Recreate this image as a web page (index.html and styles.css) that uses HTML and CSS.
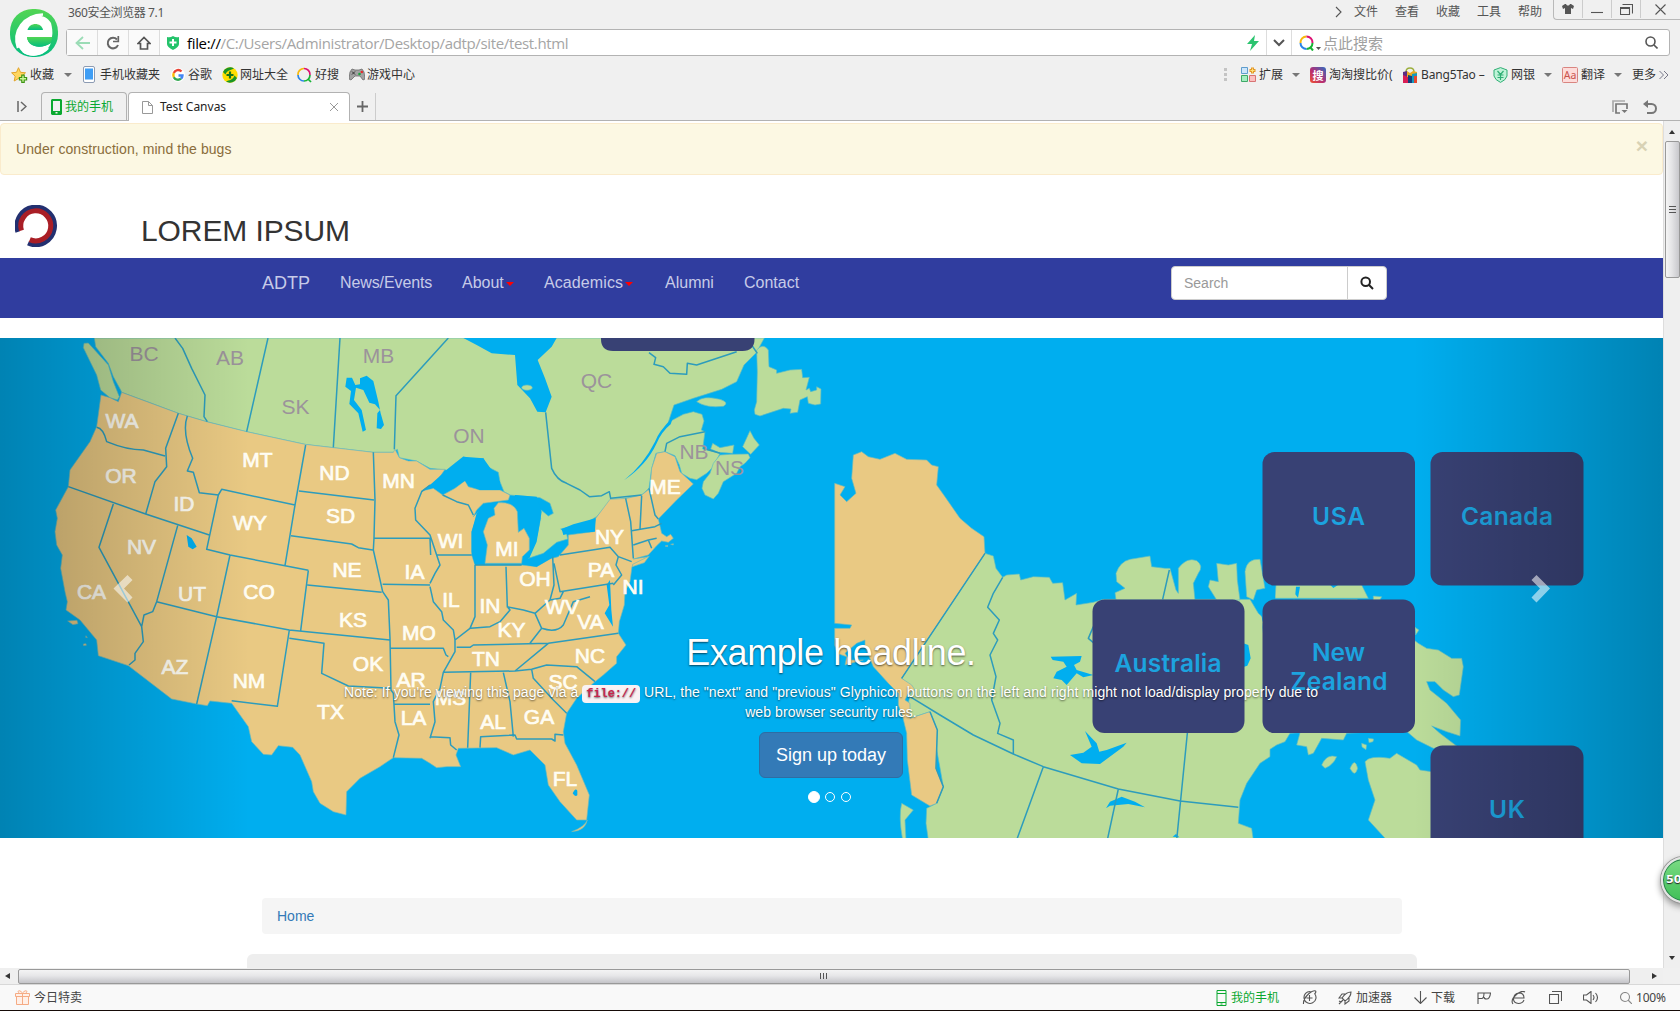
FILE: index.html
```html
<!DOCTYPE html>
<html lang="zh-CN">
<head>
<meta charset="utf-8">
<title>Test Canvas</title>
<link rel="stylesheet" href="styles.css">
</head>
<body>
<div class="window">
<header class="chrome">
  <svg class="brand" width="52" height="58" viewBox="0 0 52 58"><defs><linearGradient id="lg" x1="0" y1="0" x2="0" y2="1"><stop offset="0" stop-color="#52d553"/><stop offset="1" stop-color="#04bd80"/></linearGradient></defs><rect x="0" y="1" width="48" height="48" rx="22.500" fill="url(#lg)"/><path d="M42 29H17c1 11 15 12 24 6-5 12-17 16-27 10C3 37 5 22 14 14c9-8 21-9 27 1 1 4 2 9 1 14z" fill="#fff"/><path d="M17.500 22c2-8 14-8 15.500 0z" fill="url(#lg)"/><path d="M17 29h25l-1 6c-9 6-23 5-24-6z" fill="url(#lg)"/><path d="M8 40C2 23 14 7 33 6.500M13 43c6 5 18 5 25-3" fill="none" stroke="#fff" stroke-width="2.500"/></svg>
  <div class="bars">
    <div class="titlebar">
      <span class="app">360安全浏览器 7.1</span>
      <div class="menus"><svg width="8" height="12" viewBox="0 0 8 12" class="st"><path d="M1 1l5 5-5 5"/></svg><span>文件</span><span>查看</span><span>收藏</span><span>工具</span><span>帮助</span></div>
      <div class="winbtns">
        <span><svg width="12" height="10" viewBox="0 0 12 10"><path d="M3 0h1c1 2 3 2 4 0h1l3 2-1 3-2-1v6H3V4L1 5 0 2z" fill="#555"/></svg></span>
        <span><svg width="12" height="10" viewBox="0 0 12 10" class="st"><path d="M0 8.500h12"/></svg></span>
        <span><svg width="13" height="11" viewBox="0 0 13 11" class="st"><path d="M.5 3.500h9v7h-9zM.5 4.500h9M2.500 .5h10v9"/></svg></span>
        <span><svg width="11" height="11" viewBox="0 0 11 11" class="st"><path d="M.5 .5l10 10M10.500 .5l-10 10"/></svg></span>
      </div>
    </div>
    <div class="address">
      <span class="ab"><svg width="15" height="14" viewBox="0 0 15 14" fill="none" stroke="#9bdcb6" stroke-width="1.800"><path d="M15 7H1.500M8 1L1.500 7 8 13"/></svg></span>
      <span class="ab"><svg width="14" height="14" viewBox="0 0 14 14" fill="none" stroke="#666" stroke-width="2"><path d="M11 3.500A5.300 5.300 0 1 0 12 9"/><path d="M12.300 0v5.500H7" stroke-width="1.700"/></svg></span>
      <span class="ab"><svg width="14" height="14" viewBox="0 0 14 14" fill="none" stroke="#555" stroke-width="1.700"><path d="M1 7.500L7 1.500l6 6h-2.500v5.500h-7V7.500z"/></svg></span>
      <svg class="shield" width="12" height="14" viewBox="0 0 12 14"><path d="M0 1q3 1 6-1 3 2 6 1v7q0 3-6 6-6-3-6-6z" fill="#24c36b"/><path d="M6 3v7M2.500 6.500h7" stroke="#fff" stroke-width="2"/></svg>
      <span class="url"><b>file://</b>/C:/Users/Administrator/Desktop/adtp/site/test.html</span>
      <svg class="bolt" width="12" height="16" viewBox="0 0 12 16"><path d="M8 0L0 9h5l-2 7 9-10H7z" fill="#2bc46f"/></svg>
      <span class="drop"><svg width="12" height="8" viewBox="0 0 12 8" fill="none" stroke="#555" stroke-width="2"><path d="M1 1l5 5 5-5"/></svg></span>
      <svg class="so" width="22" height="16" viewBox="0 0 22 16" fill="none" stroke-width="2"><path d="M1.500 8A6 6 0 0 1 7.500 1.500" stroke="#f6b90c"/><path d="M7.500 1.500A6 6 0 0 1 13.500 8" stroke="#dd1173"/><path d="M13.500 8A6 6 0 0 1 7.500 14" stroke="#17b536"/><path d="M7.500 14A6 6 0 0 1 1.500 8" stroke="#2a84e8"/><path d="M11 12l3 3.500" stroke="#17b536"/><path d="M17 12h5l-2.500 3z" fill="#555"/></svg>
      <span class="ph">点此搜索</span>
      <svg class="mag" width="13" height="13" viewBox="0 0 13 13" fill="none" stroke="#555" stroke-width="1.600"><circle cx="5.500" cy="5.500" r="4.500"/><path d="M9 9l3.500 3.500"/></svg>
    </div>
  </div>
</header>
<div class="bookmarks">
  <span class="bm w1"><svg width="17" height="16" viewBox="0 0 17 16"><path d="M7.500 .7l2 4.600 5 .5-3.700 3.400 1 4.800-4.300-2.500L3.200 14l1-4.800L.6 5.800l4.900-.5z" fill="#ffd65e" stroke="#e2a42b"/><path d="M12 7.500v8.500M7.800 11.800h8.400" stroke="#3d9413" stroke-width="3.600"/><path d="M12 8.800v6M9 11.800h6" stroke="#c9f79a" stroke-width="1.400"/></svg>收藏</span>
  <i class="dn w2"></i>
  <span class="bm w3"><svg width="13" height="17" viewBox="0 0 13 17"><rect x=".5" y=".5" width="11" height="16" rx="1.500" fill="#fff" stroke="#8c9bb3"/><rect x="2" y="2.500" width="8" height="11" fill="#3f9ef5"/></svg>手机收藏夹</span>
  <span class="bm w4"><svg width="14" height="14" viewBox="0 0 14 14" fill="none" stroke-width="2.400"><circle cx="7" cy="7" r="7" fill="#fff"/><path d="M10.500 3.500A4.700 4.700 0 0 0 2.800 5" stroke="#ea4335"/><path d="M2.800 5a5 5 0 0 0 0 4.200" stroke="#fbbc05"/><path d="M2.800 9.200A4.700 4.700 0 0 0 10 10.700" stroke="#34a853"/><path d="M10 10.700c1-1 1.500-2 1.500-3.200H7.500" stroke="#4285f4"/></svg>谷歌</span>
  <span class="bm w5"><svg width="16" height="16" viewBox="0 0 16 16"><circle cx="8" cy="8" r="7.700" fill="#ffde00"/><path d="M1 5A7.700 7.700 0 0 1 12 1.400C9 3 5 3 3.500 7.500z" fill="#199526"/><path d="M15 11A7.700 7.700 0 0 1 4 14.600C7 13 11 13 12.500 8.500z" fill="#199526"/><path d="M8 4.500v7M4.500 8h7" stroke="#14741b" stroke-width="2.200"/></svg>网址大全</span>
  <span class="bm w6"><svg width="15" height="16" viewBox="0 0 15 16" fill="none" stroke-width="1.700"><path d="M1 8A6 6 0 0 1 7 1.500" stroke="#f6b90c"/><path d="M7 1.500A6 6 0 0 1 13 8" stroke="#dd1173"/><path d="M13 8A6 6 0 0 1 7 14" stroke="#17b536"/><path d="M7 14A6 6 0 0 1 1 8" stroke="#2a84e8"/><path d="M11 12l3 3" stroke="#17b536"/></svg>好搜</span>
  <span class="bm w7"><svg width="16" height="13" viewBox="0 0 16 13"><path d="M3 1l3 1h4l3-1 2 3 1 7-2 1-3-4H6l-4 4-2-1 1-7z" fill="#a2a2a2" stroke="#6b6b6b" stroke-width=".8"/><path d="M3 3.500l3 3M6 3.500l-3 3" stroke="#333"/><circle cx="10.500" cy="6" r="1.300" fill="#18a33c"/><circle cx="12.800" cy="4" r="1.300" fill="#e52c2c"/></svg>游戏中心</span>
  <span class="grow"></span>
  <svg class="w8" width="3" height="13" viewBox="0 0 3 13" fill="#c4c4c4"><path d="M0 0h3v3H0zM0 5h3v3H0zM0 10h3v3H0z"/></svg>
  <span class="bm w9"><svg width="15" height="15" viewBox="0 0 15 15"><path d="M.5 .5h6v6h-6z" fill="#cde6fb" stroke="#5f9dcd"/><path d="M.5 8.500h6v6h-6z" fill="#a4edc0" stroke="#3fa968"/><path d="M8.500 8.500h6v6h-6z" fill="#fbc0c0" stroke="#d87474"/><path d="M11.500 .5v6M8.500 3.500h6" stroke="#e39828" stroke-width="3"/><path d="M11.500 1.500v4M9.500 3.500h4" stroke="#ffe27a"/></svg>扩展</span>
  <i class="dn w10"></i>
  <span class="bm w11"><svg width="16" height="16" viewBox="0 0 16 16"><defs><linearGradient id="tt" x1="0" y1="1" x2="1" y2="0"><stop stop-color="#f2542d"/><stop offset=".45" stop-color="#b52d74"/><stop offset="1" stop-color="#2f6cc0"/></linearGradient></defs><rect width="16" height="16" rx="3" fill="url(#tt)"/><text x="2.500" y="12.500" class="sou">搜</text></svg>淘淘搜比价(</span>
  <span class="bm w12"><svg width="14" height="16" viewBox="0 0 14 16"><path d="M3 5Q3 1 7 1t4 4" fill="none" stroke="#9caf3d" stroke-width="1.500"/><path d="M0 5l4-1v12H0z" fill="#5b2d83"/><path d="M0 8l5 2v6H0z" fill="#d91e54"/><path d="M4 4l3 2 3-2 4 1v5H4z" fill="#eaaa22"/><path d="M5 8l4 1v7H5z" fill="#123e7c"/><path d="M9 7l5-1v10H9z" fill="#1599bd"/><path d="M11 9h3v7h-3z" fill="#e6482e"/></svg>Bang5Tao –</span>
  <span class="bm w13"><svg width="15" height="16" viewBox="0 0 15 16"><path d="M7.500 .6l6.500 2.400v6q-1 4-6.500 6.400Q2 13 1 9V3z" fill="#bff3d8" stroke="#2fae74"/><path d="M4.500 4l3 3.500 3-3.500M7.500 7.500V13M4.500 8h6M4.500 10.500h6" fill="none" stroke="#2fae74" stroke-width="1.200"/></svg>网银</span>
  <i class="dn w14"></i>
  <span class="bm w15"><svg width="16" height="16" viewBox="0 0 16 16"><rect x=".5" y=".5" width="15" height="15" rx="1" fill="#fddcda" stroke="#d98580"/><text x="1.700" y="12" class="aa">Aa</text></svg>翻译</span>
  <i class="dn w16"></i>
  <span class="bm w17">更多</span>
  <svg width="10" height="8" viewBox="0 0 10 8" fill="none" stroke="#778"><path d="M.5 0l4 4-4 4M5 0l4 4-4 4"/></svg>
</div>
<div class="tabs">
  <svg class="pin" width="10" height="11" viewBox="0 0 10 11" fill="none" stroke="#666" stroke-width="1.500"><path d="M1 0v11M4 1l5 4.500L4 10"/></svg>
  <div class="tab phone"><svg width="11" height="16" viewBox="0 0 11 16"><path fill-rule="evenodd" d="M1 0h9l1 1v14l-1 1H1l-1-1V1zm1 2v10h7V2zm2.500 11v1.500h2V13z" fill="#0aa830"/></svg>我的手机</div>
  <div class="tab active"><svg width="11" height="13" viewBox="0 0 11 13" fill="#fff" stroke="#999"><path d="M.5 .5h6l4 4v8H.5zM6.500 .5v4h4"/></svg><span>Test Canvas</span><svg width="8" height="8" viewBox="0 0 8 8" stroke="#999"><path d="M0 0l8 8M8 0L0 8"/></svg></div>
  <div class="plus"><svg width="11" height="11" viewBox="0 0 11 11" stroke="#666" stroke-width="1.800"><path d="M5.500 0v11M0 5.500h11"/></svg></div>
  <span class="grow"></span>
  <svg class="rst" width="17" height="15" viewBox="0 0 17 15" fill="none" stroke="#777" stroke-width="1.700"><path d="M1 12V1h12" stroke="#aaa"/><path d="M8 13H4V4h11v5"/><path d="M9.500 10h6l-3 3z" fill="#777" stroke="none"/></svg>
  <svg class="undo" width="15" height="14" viewBox="0 0 15 14" fill="none" stroke="#777" stroke-width="2"><path d="M2 4h6.500a4.500 4.500 0 0 1 0 9H4"/><path d="M0 4l5-4v8z" fill="#777" stroke="none"/></svg>
</div>
<main class="view">
<div class="page">
  <div class="alert"><span>Under construction, mind the bugs</span><b>×</b></div>
  <div class="masthead"><svg width="42" height="42" viewBox="0 0 42 42" fill="none"><path d="M2.700 27A19 19 0 1 1 13 38.300" stroke="#233070" stroke-width="4.500"/><path d="M6.500 25.500A15 15 0 1 1 14.800 34.600" stroke="#a91e26" stroke-width="5"/></svg><h1>LOREM IPSUM</h1></div>
  <nav class="nav">
    <a class="n0">ADTP</a><a class="n1">News/Events</a><a class="n2">About<i></i></a><a class="n3">Academics<i></i></a><a class="n4">Alumni</a><a class="n5">Contact</a>
    <span class="grow"></span>
    <div class="search"><span>Search</span><em><svg width="14" height="14" viewBox="0 0 14 14" fill="none" stroke="#222" stroke-width="2"><circle cx="5.700" cy="5.700" r="4.300"/><path d="M8.800 8.800l4.200 4.200"/></svg></em></div>
  </nav>
  <section class="carousel">
    <svg class="map" width="1663" height="500" viewBox="0 338 1663 500">
      <defs>
        <linearGradient id="gl"><stop stop-opacity=".25"/><stop offset="1" stop-opacity="0"/></linearGradient>
        <linearGradient id="gr"><stop stop-opacity="0"/><stop offset="1" stop-opacity=".25"/></linearGradient>
      </defs>
      <rect y="338" width="1663" height="500" fill="#00aeef"/>
      <!-- North America, west to east -->
      <g transform="translate(0 335) scale(.33333)" stroke-linejoin="round">
        <g class="green">
          <path d="M283 9L287 35 325 85 340 125 362 165 365 172 450 203 535 235 620 260 740 290 915 328 1120 352 1180 352 1192 343 1198 368 1250 378 1290 400 1340 405 1365 385 1390 365 1420 376 1450 370 1457 392 1495 412 1500 440 1512 470 1530 480 1620 488 1650 505 1660 535 1645 543 1615 518 1622 550 1612 600 1596 640 1585 670 1630 655 1670 622 1703 612 1700 598 1682 582 1755 565 1790 545 1830 500 1925 480 1947 460 1955 400 1968 355 1995 350 2025 362 2038 390 2045 415 2070 430 2090 434 2120 415 2140 395 2160 355 2108 342 2115 290 2104 285 2112 258 2106 238 2080 230 2050 238 2005 262 2012 240 2022 210 2080 190 2165 163 2210 140 2232 90 2270 52 2293 9Z"/>
          <path d="M265 24L325 90 340 140 358 185 352 195 330 188 302 165 290 120 250 38 252 25Z"/>
          <path d="M2270 45Q2290 22 2305 45L2307 95 2330 105 2330 115 2370 105 2405 103 2408 128 2428 127 2418 165 2428 160 2432 170 2450 165 2450 155 2463 162 2462 207 2445 210 2425 205 2422 185 2400 195 2393 232 2370 235 2373 222 2350 220 2280 243 2265 238 2263 225 2270 200 2272 110Z"/>
          <path d="M2090 200Q2110 180 2160 193 2190 203 2170 214 2120 220 2090 200ZM2160 360L2190 358 2245 357 2250 368 2235 385 2220 395 2210 415 2170 440 2155 475 2140 492 2115 480 2106 460 2110 440 2130 415 2140 385ZM2250 287L2262 310 2278 330 2252 358 2228 335ZM2138 325L2160 338 2202 330 2198 355 2155 352 2132 342Z"/>
        </g>
        <g class="water"><path d="M1390 9L1430 30 1475 55 1545 60 1552 150 1590 190 1612 230 1637 232 1655 185 1635 130 1613 75 1655 35 1670 9ZM1872 436Q1930 390 1965 320 1975 290 2020 245L2012 268Q1985 290 1970 325 1940 390 1872 436ZM1040 128L1056 128 1066 150 1080 148 1080 130 1100 122 1120 138 1135 200 1142 235 1152 270 1143 282 1130 280 1132 235 1140 225 1125 208 1108 203 1090 165 1068 158 1062 195 1085 225 1098 285 1088 290 1075 235 1048 207 1053 168 1036 155Z"/></g>
        <ellipse class="green" cx="1581" cy="158" rx="16" ry="8"/>
        <g class="us">
          <path d="M303 180L330 188 355 200 365 172 535 235 620 260 740 290 915 328 1120 352 1180 352 1185 343 1198 368 1225 378 1250 378 1290 403 1335 403 1310 440 1290 450 1265 468 1300 460 1328 480 1365 460 1395 437 1405 455 1440 465 1500 465 1530 480 1525 495 1450 505 1430 525 1420 545 1435 530 1415 590 1415 660 1425 690 1565 690 1610 695 1650 672 1675 665 1705 630 1705 600 1780 590 1787 550 1830 493 1880 490 1925 480 1950 460 1955 400 1970 355 1995 350 2025 365 2040 410 2080 447 2030 495 1975 552 1985 595 2000 605 2012 598 2020 610 2005 622 1985 618 1970 632 1945 660 1900 672 1945 665 1930 680 1896 695 1890 740 1875 770 1873 810 1858 860 1855 895 1878 930 1850 965 1850 985 1810 1020 1785 1040 1730 1090 1700 1135 1690 1190 1695 1225 1730 1290 1768 1380 1760 1455 1730 1455 1680 1400 1645 1350 1635 1290 1590 1245 1540 1260 1490 1238 1375 1240 1368 1260 1382 1295 1340 1295 1310 1298 1290 1285 1265 1270 1180 1268 1140 1295 1080 1330 1040 1370 1038 1440 1000 1430 960 1405 940 1370 935 1340 900 1260 878 1237 835 1232 815 1260 790 1258 755 1220 745 1175 695 1105 630 1098 622 1112 590 1107 515 1092 385 992 295 962 290 915 240 855 198 825 202 800 195 770 182 700 187 660 170 630 165 590 172 550 167 525 205 455 210 405 270 320 290 275Z"/>
        </g>
        <g class="water"><path d="M1495 500L1478 515 1485 540 1465 560 1450 590 1463 635 1455 690 1425 690 1415 650 1415 590 1430 535 1455 507ZM1540 515L1545 480 1610 485 1625 530 1610 620 1588 670 1565 672 1590 640 1590 605 1570 580 1550 592ZM1565 688L1585 675 1615 668 1660 635 1690 640 1670 658 1650 672 1610 695ZM1685 582L1720 568 1787 550 1785 590 1710 595 1690 600ZM1290 450L1340 405 1390 365 1450 370 1500 440 1500 465 1440 465 1405 450 1395 437 1360 460 1328 475 1300 458 1265 468ZM560 600L575 610 590 635 578 643 565 635ZM1718 1375q8-18 14-8v14q-7 6-14-6ZM1830 735l-10 15 8 60-14 25 25 40-5-50Z"/></g>
        <path class="us" d="M1495 503Q1540 500 1552 530L1555 592 1572 580 1588 610 1588 645 1567 665 1565 685 1455 685 1462 630 1450 590 1465 550 1485 540 1482 520Z"/>
        <path class="us" d="M203 858l28-2 3 10-15 3zM258 902l4 6-5-1zM250 927l8-1 1 5-8 1zM1898 688l50-25-15 20-36 12zM1715 1490q40-15 47-35-7 33-47 35zM1995 633l8-2v4zM2012 628l8-2v4z"/>
        <g class="lines">
          <path d="M525 9L548 40 575 100 615 180 612 245 622 260M804 9L740 290M1020 9L1000 337M1290 70L1188 182 1183 343M1290 70L1345 9M1637 232L1655 400Q1670 435 1700 445L1740 465 1768 485 1805 482 1828 470 1832 490 1925 480M1947 53L1967 68 1962 88 1990 95 2010 115 2060 118 2062 85 2090 90 2210 50M2255 30L2272 55"/>
          <path d="M290 277Q310 280 320 320 380 345 430 345L495 363M535 235L497 340 500 395 465 440 437 537M205 455L437 537 628 600M562 243Q545 290 578 370L562 408 580 412 598 473 655 480 665 463 885 510M655 480L620 643 690 660 855 692 925 706M917 330L885 510 855 692M897 468L1122 495M873 602L1055 627 1075 638 1118 645M1120 352L1125 495 1122 610 1120 645 1148 770 1165 795 1170 910 1173 1065 1180 1075 1185 1160 1197 1200 1180 1268M1122 610H1290L1292 660M1290 450L1265 470 1245 520 1247 555 1290 600 1310 660 1320 690 1305 715 1290 745M340 507L297 637 425 875 430 920 405 955 405 975 387 990M533 572L470 800 458 830 432 840 425 875M470 800L650 845 868 885 1170 915M690 660L650 845 590 1107M925 706L902 887M922 750L1145 772M868 885L832 1114 695 1097M868 910L972 925 965 1015 1045 1053 1173 1060M1148 748L1290 750M1172 940H1330L1338 960 1345 965M1183 1108H1290"/>
          <path d="M1328 480L1370 500 1405 510 1420 540M1310 660H1415M1425 690L1425 845 1410 880 1365 915 1360 885 1330 855 1325 830 1300 800 1290 755M1518 695L1522 815 1530 825 1500 860 1470 875 1412 880M1425 690H1565M1658 665L1662 750 1650 795 1605 835 1570 825 1520 815M1680 660L1830 637 1855 665 1895 680M1662 685L1680 770 1840 745M1855 665L1848 690 1865 720 1840 750M1370 937L1410 937 1420 930 1645 925 1855 895M1605 835L1625 880 1590 925M1625 880Q1670 895 1690 870L1720 800 1770 785M1650 795L1680 790 1690 770M1330 1012L1545 1008 1645 925M1545 1008L1595 1003 1640 990 1730 995 1785 1040M1595 1003L1600 1030 1660 1095 1700 1135M1365 915L1365 950 1330 1012 1320 1060 1300 1100 1305 1160 1290 1210M1412 1013L1403 1238M1510 1013L1530 1100 1540 1205M1440 1238L1442 1205 1545 1200 1550 1212 1655 1212 1665 1218 1665 1198 1690 1200M1290 1205L1350 1208 1352 1230 1370 1245M1877 490L1892 560 1900 670M1925 482L1920 583M1947 460L1965 540 1975 552M1895 587L1965 575 1985 565M1900 630L1945 615 1970 610M1945 615L1955 640M1995 350L2000 325 2040 305 2115 290M2160 355L2110 340"/>
        </g>
      </g>
      <!-- Arctic coast -->
      <g transform="translate(830 440) scale(.33333)">
        <g class="green">
          <path d="M465 340L490 348 498 385 518 412 530 405 568 402 572 420 610 410 658 412 668 430 698 428 705 480 740 460 738 495 790 487 820 478 1160 478 1260 478 1285 520 1330 560 1390 480 1580 478 1700 560 1765 610 1790 625 1825 630 1865 655 1895 655 1900 680 1888 765 1870 770 1840 750 1815 725 1790 725 1800 750 1850 790 1892 840 1890 888 1850 875 1805 858 1830 880 1880 918 1810 925 1760 900 1725 870 1550 880 1540 900 1475 895 1450 940 1435 945 1430 920 1400 915 1410 878 1380 880 1365 905 1340 915 1320 928 1320 950 1290 970 1250 1030 1230 1080 1225 1150 1265 1165 1270 1200H295L288 1150 290 1105 320 1090 340 1040 300 815 240 835 235 790 245 740 215 715Z"/>
          <path d="M858 400Q870 365 900 358L960 348 965 380 1005 385 1020 385 1038 450 1045 460 1045 385Q1070 350 1100 362 1122 378 1105 400L1090 430 1095 480H858L855 458 885 445 860 425ZM1160 370L1195 375 1220 370 1222 420 1230 480H1160L1135 440 1140 420 1165 425ZM1245 395Q1250 355 1290 358L1305 445 1280 450 1270 480 1250 470ZM1338 435H1595L1615 475H1335ZM1630 468l25 2-5 10h-20zM1755 562l12 8-10 15z"/>
          <path d="M1605 965Q1620 945 1680 955L1700 940 1760 975 1770 990 1805 995V1200H1670L1615 1140 1635 1080 1615 1020ZM1475 975Q1490 940 1520 950 1510 975 1485 985ZM1560 985Q1575 950 1583 985 1575 1015 1560 985ZM1595 910l15 5-2 14-12-8zM1615 895l16 2-2 8-12 3zM215 1090L250 1110 225 1140 228 1200H218Q205 1130 215 1090Z"/>
        </g>
        <g class="us"><path d="M14 130L45 140 30 165 50 185 78 160 65 115 70 45 95 35 115 50 150 58 195 40 230 58 290 60 305 75 325 80 320 135 345 170 390 235 425 265 462 290 465 340 215 715 245 735 255 750 235 760 225 780 240 790 240 835 300 815 322 870 318 985 340 1040 320 1090 300 1098 245 1065 232 960 230 880 218 830 205 795 205 760 175 730 130 680 105 620 105 600 80 610 45 640 60 660 100 660 45 675 50 650 20 640 14 615V565H60L65 555 14 550Z"/></g>
        <g class="water"><path d="M662 650L755 648 750 665 732 675 740 690 790 705 760 712 740 700 710 735 695 720 670 715 680 695 710 680 700 665 668 660ZM765 873L800 910 808 935 830 930 890 908 880 920 810 972 755 970 720 945 760 938 785 920ZM828 1105L840 1085 875 1070 915 1085 945 1102 895 1092 840 1097ZM1240 610l15 5 7 40-10 22-14 5zM1395 478l15 0-3 30zM1500 434h25l-15 10zM1398 440l12 0-6 33-8-10zM1305 500l-8 50 2 30zM1028 1190l10-8 10 10zM1290 478l22-30 20-10 4 40v160l-35-60-6-50z"/></g>
        <g class="lines"><path d="M465 340L215 715M518 412L490 460 473 502 508 540 490 580 503 600 480 645 498 710 485 780 510 850 503 880 550 900V942M240 770L330 825 430 885 550 942 640 980 865 1047 1050 1083 1225 1102M640 980L560 1200M865 1047L832 1200M1073 870L1040 1200M1018 390L998 478M300 815L322 870 318 985 340 1040 320 1090M790 560L775 595 790 608"/></g>
      </g>
      <g class="boxes"><path d="M601 330H754.500V339Q754.500 351 742.500 351H613Q601 351 601 339Z"/><rect x="1262.500" y="452" width="152.500" height="133.500" rx="12"/><rect x="1430.500" y="452" width="153" height="133.500" rx="12"/><rect x="1092.500" y="599.500" width="152" height="133.500" rx="12"/><rect x="1262.500" y="599.500" width="152.500" height="133.500" rx="12"/><rect x="1430.500" y="745.500" width="153" height="133.500" rx="12"/></g>
      <g class="names"><text x="1312" y="524.700" textLength="53">USA</text><text x="1461" y="524.700" textLength="92">Canada</text><text x="1114.500" y="672" textLength="107">Australia</text><text x="1312" y="660.500" textLength="53">New</text><text x="1290.500" y="690" textLength="97">Zealand</text><text x="1489" y="817.500" textLength="36">UK</text></g>
      <g class="prov"><text x="144" y="361">BC</text><text x="230" y="365">AB</text><text x="295.500" y="414">SK</text><text x="378.500" y="362.500">MB</text><text x="469" y="442.500">ON</text><text x="596.500" y="388">QC</text><text x="694" y="459">NB</text><text x="729.500" y="474.500">NS</text></g>
      <g class="states"><text x="122" y="428">WA</text><text x="121" y="482.500">OR</text><text x="184" y="511">ID</text><text x="257.500" y="467">MT</text><text x="334.500" y="480">ND</text><text x="398.500" y="487.500">MN</text><text x="250" y="530">WY</text><text x="340.500" y="522.500">SD</text><text x="141.500" y="553.500">NV</text><text x="347" y="577">NE</text><text x="414.500" y="579">IA</text><text x="91.500" y="598.500">CA</text><text x="192" y="601">UT</text><text x="259" y="598.500">CO</text><text x="353" y="627">KS</text><text x="419" y="640">MO</text><text x="175" y="673.500">AZ</text><text x="249" y="687.500">NM</text><text x="368" y="671">OK</text><text x="411" y="686.500">AR</text><text x="330.500" y="718.500">TX</text><text x="413.500" y="725">LA</text><text x="450.500" y="548">WI</text><text x="507" y="556">MI</text><text x="665" y="494">ME</text><text x="609.500" y="544">NY</text><text x="601" y="577">PA</text><text x="535" y="585.500">OH</text><text x="633" y="593.500">NI</text><text x="451" y="606.500">IL</text><text x="490" y="612.500">IN</text><text x="562" y="614">WV</text><text x="590.500" y="629">VA</text><text x="511.500" y="637">KY</text><text x="486" y="666">TN</text><text x="590" y="662.500">NC</text><text x="563" y="689">SC</text><text x="450.500" y="704.500">MS</text><text x="493" y="729">AL</text><text x="539" y="723.500">GA</text><text x="565" y="786">FL</text></g>
      <rect y="338" width="249.500" height="500" fill="url(#gl)"/><rect x="1413.500" y="338" width="249.500" height="500" fill="url(#gr)"/>
      <path class="chev" d="M113.500 588.500L127.500 575l5 5-8.500 8.500 8.500 9-5 5zM1550 588.500L1536.500 575l-5 5 8.500 8.500-8.500 9 5 5z"/>
    </svg>
    <div class="caption">
      <h2>Example headline.</h2>
      <p>Note: If you're viewing this page via a <code>file://</code> URL, the "next" and "previous" Glyphicon buttons on the left and right might not load/display properly due to web browser security rules.</p>
      <a class="btn">Sign up today</a>
      <div class="dots"><i class="on"></i><i></i><i></i></div>
    </div>
  </section>
  <div class="crumb">Home</div>
  <div class="jumbo"></div>
</div>
<div class="vbar"><i class="up"></i><div class="vthumb"><b></b></div><span class="grow"></span><i class="down"></i></div>
</main>
<div class="hbar"><i class="lt"></i><div class="hthumb"><b></b></div><i class="rt"></i></div>
<footer class="status">
  <svg class="gift" width="15" height="15" viewBox="0 0 15 15" fill="#fff0e8" stroke="#f5ab84"><path d="M1.500 6.500h12v8h-12zM.5 3.500h14v3H.5zM7.500 4v10M7.500 3C4-1 2 1 4 3M7.500 3c3.500-4 5.500-2 3.500 0"/></svg><span>今日特卖</span>
  <span class="grow"></span>
  <span class="s1 g"><svg width="11" height="16" viewBox="0 0 11 16" fill="none" stroke="#0aa830"><path d="M1 .5h9v15H1zM1 3.500h9M1 12.500h9M4.500 14h2"/></svg>我的手机</span>
  <span class="s2"><svg width="15" height="15" viewBox="0 0 15 15" class="st"><path d="M12.500 3.500A6 6 0 1 1 8.500 1.500M1.500 14Q1 9 7 3.500q4-3.500 6.500-2.500 1 1-1 3M4.500 8h6M7.500 5v6"/></svg></span>
  <span class="s3"><svg width="14" height="14" viewBox="0 0 14 14" class="st"><path d="M4 7Q8 1 13 1q0 5-6 9zM4 7H1l3-4h3M7 10v3l4-3V7M1 13l4-4M1 10l2 1"/></svg>加速器</span>
  <span class="s4"><svg width="13" height="13" viewBox="0 0 13 13" class="st"><path d="M6.500 0v12M.5 6.500l6 6 6-6"/></svg>下载</span>
  <span class="s5"><svg width="14" height="12" viewBox="0 0 14 12" class="st"><path d="M1 12V1h12.500q-.5 6-4 6-2.500 0-2.500-2M1 6.500h4Q7 6 7 1"/></svg></span>
  <span class="s6"><svg width="15" height="14" viewBox="0 0 15 14" class="st"><path d="M3 7h10q0-5-5-5T2.500 8q0 4 5 4.500 4 0 5.500-3.500M2 13Q-1 9 6 3q5-4 8-2"/></svg></span>
  <span class="s7"><svg width="13" height="13" viewBox="0 0 13 13" class="st"><path d="M.5 3.500h9v9h-9zM3 .5h9.500V10"/></svg></span>
  <span class="s8"><svg width="16" height="13" viewBox="0 0 16 13" class="st"><path d="M.5 4h3L8 .5v12L3.500 9h-3zM10 4q2 2.500 0 5M12.500 2q4 4.500 0 9"/></svg></span>
  <span class="s9"><svg width="12" height="12" viewBox="0 0 12 12" class="st light"><circle cx="5" cy="5" r="4.500"/><path d="M8 8l4 4"/></svg>100%</span>
</footer>
<div class="ball">50</div>
</div>
</body>
</html>
```
FILE: styles.css
```css
*{box-sizing:border-box}
body{margin:0;background:#f0f0f0;font:12px/16px "Noto Sans","Noto Sans CJK SC",sans-serif;color:#333}
.window{width:1680px;height:1011px;display:flex;flex-direction:column;overflow:hidden;position:relative;border-bottom:1px solid #160b08}
.grow{flex:1}
svg{flex:none;display:block}
.st{fill:none;stroke:#555;stroke-width:1.1}
.light{stroke:#888}
.chrome{display:flex;height:59px}
.brand{margin:8px 0 0 10px;width:52px}
.bars{flex:1;margin-left:4px}
.titlebar{height:29px;display:flex;align-items:flex-start}
.app{margin:5px auto 0 2px;color:#555;font-size:12px;letter-spacing:-.4px}
.menus{display:flex;align-items:center;margin-top:4px;color:#555}
.menus svg{margin-right:11px}
.menus span{width:41px}
.winbtns{display:flex;height:20px;border:1px solid #b9b9b9;border-width:0 0 1px 1px;border-radius:0 0 0 4px;margin-left:-6px;width:127px}
.winbtns span{width:29px;height:18px;display:flex;align-items:center;justify-content:center;border-right:1px solid #ccc}
.winbtns span:last-child{width:39px;border:0}
.address{height:27px;width:1604px;border:1px solid #b3b3b3;border-radius:3px;background:#fff;display:flex;align-items:center}
.ab{width:31px;height:25px;background:#fafafa;border-right:1px solid #ddd;display:flex;align-items:center;justify-content:center}
.shield{margin-left:7px}
.url{font:15px/20px "Open Sans","Noto Sans",sans-serif;color:#a5a5a5;margin-left:8px;width:1060px;letter-spacing:-.35px;white-space:nowrap}
.url b{font-weight:400;color:#000}
.bolt{margin-left:0}
.drop{margin-left:7px;width:26px;height:25px;border:1px solid #ddd;border-width:0 1px;display:flex;align-items:center;justify-content:center}
.so{margin-left:7px}
.ph{font-size:15px;color:#a0a0a0;margin-left:2px;flex:1}
.mag{margin-right:11px}
.bookmarks{height:31px;display:flex;align-items:center;padding:0 11px 0 11px}
.bm{display:flex;align-items:center;gap:2px;white-space:nowrap}
.w1{width:53px}.w2{margin-right:11px}.w3{width:88px;gap:4px}.w4{width:51px;gap:3px}.w5{width:75px}.w6{width:52px;gap:3px}.w7{width:70px}
.dn{border:4px solid transparent;border-top-color:#777;border-bottom:0;width:8px}
.w8{margin-right:14px}.w9{width:51px;gap:3px}.w10{margin-right:10px}.w11{width:93px;gap:3px}.w12{width:90px;gap:4px;letter-spacing:-.15px}.w13{width:51px;gap:3px}.w14{margin-right:10px}.w15{width:52px;gap:3px}.w16{margin-right:10px}.w17{width:27px}
.sou{font:bold 11px "Noto Sans CJK SC",sans-serif;fill:#fff}
.aa{font:10.500px "Noto Sans",sans-serif;fill:#c9534d}
.tabs{height:31px;border-bottom:1px solid #b2b2b2;display:flex;align-items:center;padding-right:22px}
.pin{margin:3px 14px 0 17px}
.tab{height:28px;margin-top:2px;border:1px solid #b2b2b2;border-bottom:0;border-radius:4px 4px 0 0;display:flex;align-items:center}
.phone{width:86px;padding-left:9px;gap:3px;color:#0aa830;margin-right:1px}
.active{width:222px;height:29px;margin-bottom:-1px;background:#fff;padding:0 11px 0 13px;gap:7px;color:#222}
.active span{flex:1}
.plus{width:26px;height:27px;border-right:1px solid #ccc;display:flex;align-items:center;justify-content:center;margin-top:3px}
.rst{margin:5px 14px 0 0}
.undo{margin-top:4px}
.view{height:847px;background:#fff;display:flex}
.page{width:1663px;height:847px;overflow:hidden;background:#fff;font:14px/20px "Liberation Sans",Arial,sans-serif}
.alert{margin-top:2px;height:52px;border:1px solid #faebcc;border-radius:4px;background:#fcf8e3;color:#8a6d3b;display:flex;justify-content:space-between;padding:15px 14px 15px 15px;letter-spacing:.07px}
.alert b{font:bold 21px/14px "Liberation Sans",sans-serif;color:#d8d2b4}
.masthead{height:83px;display:flex;padding:30px 0 0 15px}
.masthead h1{font:30px/33px "Liberation Sans",Arial,sans-serif;margin:9px 0 0 84px;color:#333;letter-spacing:-.1px}
.nav{height:60px;background:#303d9f;display:flex;padding:15px 276px 0 262px;color:#c7cbe8;font-size:16px}
.nav a{line-height:20px}
.n0{width:78px;font-size:18px}.n1{width:122px;letter-spacing:-.1px}.n2{width:82px}.n3{width:121px;letter-spacing:.1px}.n4{width:79px}
.nav i{display:inline-block;border:4px solid transparent;border-top-color:red;border-bottom:0;margin-left:2px;vertical-align:middle}
.search{width:216px;height:34px;margin-top:-7px;background:#fff;border:1px solid #ccc;border-radius:4px;font-size:14px;color:#999;display:flex;align-items:center;padding-left:12px}
.search span{flex:1}
.search em{width:39px;height:32px;border-left:1px solid #ccc;display:flex;align-items:center;justify-content:center}
.carousel{margin-top:20px;height:500px;display:grid}
.carousel>*{grid-area:1/1}
.green{fill:#bbdc9a;stroke:#5cbcc4;stroke-width:2}
.us{fill:#e9c983;stroke:#6fb9b8;stroke-width:2}
.water{fill:#00aeef;stroke:none}
.lines{fill:none;stroke:#2d9cbc;stroke-width:4.500;stroke-linejoin:round}
.boxes{fill:#384174}
.names{font:600 24.500px Inter,sans-serif;fill:#1ca3df}
.names text{paint-order:stroke}
.prov,.states{text-anchor:middle}
.prov{font:21px "Liberation Sans",sans-serif;fill:#9b939b}
.states{font:21px "Liberation Sans",sans-serif;fill:#fffdf3;stroke:#fffdf3;stroke-width:.7}
.chev{fill:#fff;opacity:.55}
.caption{margin:295px 0 0 332px;width:998px;text-align:center;color:#fff;text-shadow:0 1px 2px rgba(0,0,0,.6)}
.caption h2{font:36px/40px "Liberation Sans",sans-serif;margin:0;letter-spacing:-.4px}
.caption p{margin:9px 0 10px;letter-spacing:.075px}
.caption code{font:bold 12px/14px "Liberation Mono",monospace;letter-spacing:-.1px;color:#c7254e;background:#f9f2f4;border-radius:4px;padding:2px 4px}
.btn{display:inline-block;height:46px;width:144px;font-size:18px;line-height:44px;background:#337ab7;border:1px solid #2e6da4;border-radius:6px;text-shadow:none}
.dots{display:flex;justify-content:center;align-items:center;gap:6px;height:12px;margin:13px 2px 0 0}
.dots i{width:10px;height:10px;border:1px solid #fff;border-radius:50%}
.dots .on{width:12px;height:12px;background:#fff;margin:0 -1px}
.crumb{margin:60px 0 0 262px;width:1140px;height:36px;padding:8px 15px;background:#f5f5f5;border-radius:4px;color:#337ab7}
.jumbo{margin:20px 0 0 247px;width:1170px;height:60px;background:#eee;border-radius:6px}
.vbar{width:17px;background:#efefef;border-left:1px solid #ddd;display:flex;flex-direction:column;align-items:center;padding:9px 0 8px}
.up,.down,.lt,.rt{border:3px solid transparent}
.up{border-bottom:4px solid #333;border-top:0}
.down{border-top:4px solid #333;border-bottom:0}
.vthumb{margin-top:7px;width:15px;height:137px;border:1px solid #999;border-radius:2px;background:linear-gradient(90deg,#f5f5f5,#e4e4e6 45%,#c8c8cc);display:flex;align-items:center;justify-content:center}
.vthumb b{width:7px;height:8px;background:repeating-linear-gradient(#555 0 1px,transparent 1px 3px)}
.hbar{height:16px;width:1663px;background:#efefef;display:flex;align-items:center;padding-left:5px}
.lt{border-right:5px solid #333;border-left:0}
.hthumb{margin-left:8px;width:1612px;height:15px;border:1px solid #999;border-radius:2px;background:linear-gradient(#f4f4f4,#e6e6e8 45%,#c4c4c8);display:flex;align-items:center;justify-content:center}
.hthumb b{width:8px;height:6px;background:repeating-linear-gradient(90deg,#555 0 1px,transparent 1px 3px)}
.rt{border-left:5px solid #333;border-right:0;margin-left:22px}
.status{height:26px;background:#f9f9f9;border-top:1px solid #d8d8d8;display:flex;align-items:center;padding-left:15px;color:#444}
.gift{margin-right:4px}
.status span:not(.grow){display:flex;align-items:center;gap:4px;white-space:nowrap}
.s1{width:86px}.status .g{color:#0aa830;gap:6px}.s2{width:36px}.s3{width:76px}.s4{width:63px}.s5{width:34px}.s6{width:38px}.s7{width:34px}.s8{width:37px}
.status .s9{width:60px;gap:5px;letter-spacing:-.2px}
.ball{position:absolute;left:1661px;top:857px;width:46px;height:46px;border-radius:50%;background:linear-gradient(#7adb83,#3fbf57);border:2px solid #e4e4e4;box-shadow:inset 0 0 0 1px #287c4c,0 0 0 1px #999,0 3px 6px 1px #999;color:#fff;font:bold 11px/42px "DejaVu Sans","Noto Sans",sans-serif;padding-left:3px;text-shadow:0 1px 1px #222}
```
